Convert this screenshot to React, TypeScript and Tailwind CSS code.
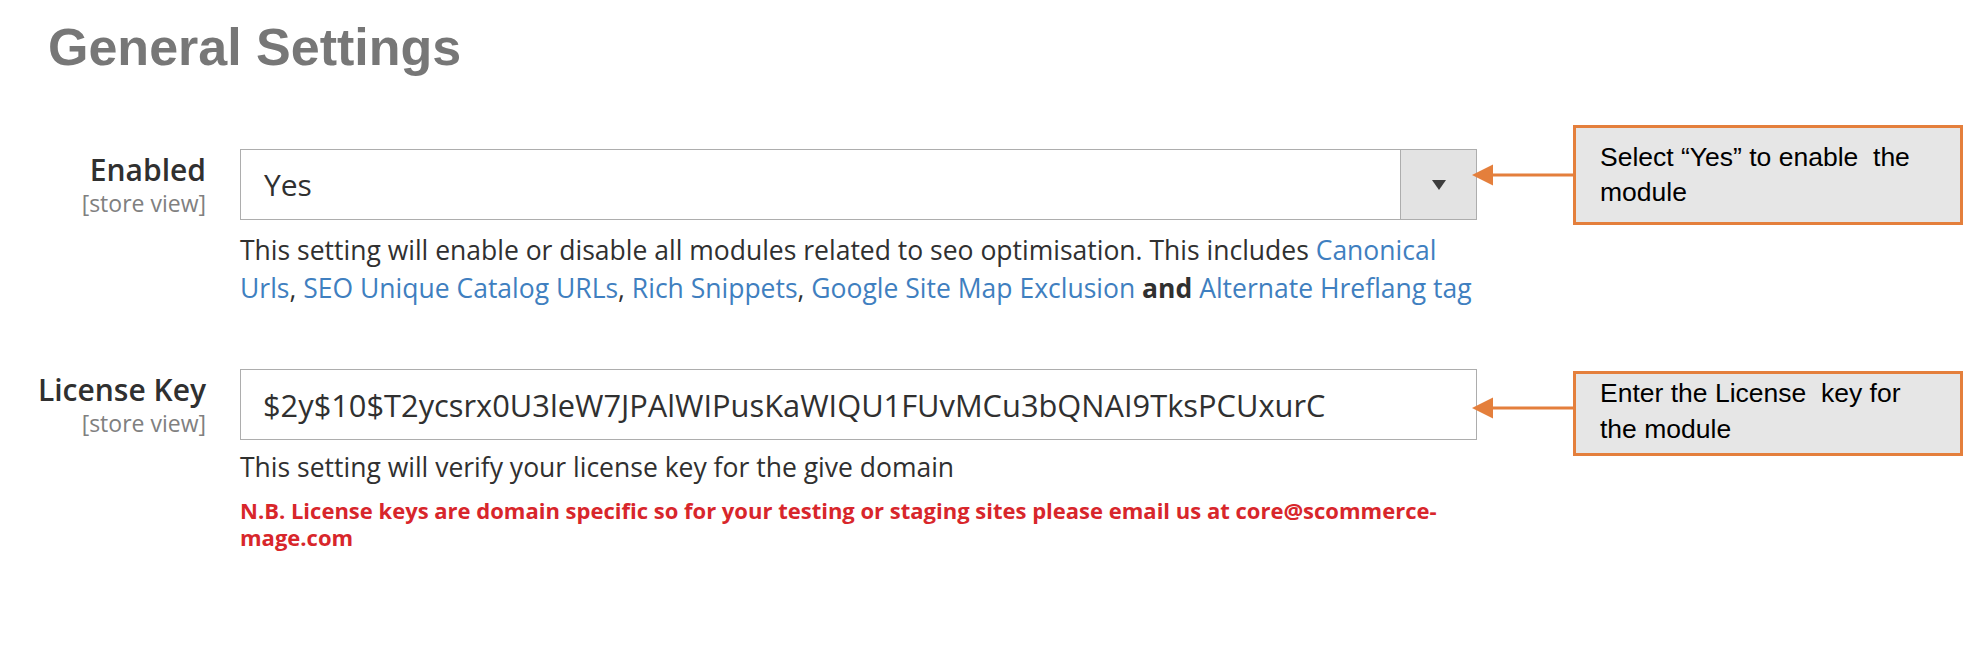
import React from "react";

function Arrow({ className = "" }: { className?: string }) {
  return (
    <svg width="101" height="24" viewBox="0 0 101 24" className={"shrink-0 -ml-[5px] " + className}>
      <line x1="18" y1="12" x2="101" y2="12" stroke="#e47f3c" strokeWidth="3" />
      <polygon points="0,12 21,1.5 21,22.5" fill="#e47f3c" />
    </svg>
  );
}

function Callout({ lines, className }: { lines: string[]; className: string }) {
  return (
    <div
      className={
        "w-[390px] shrink-0 border-[3px] border-[#e47f3c] bg-[#e6e6e6] pl-[24px] font-['Liberation_Sans',Arial,sans-serif] text-[26.5px] text-black whitespace-pre " +
        className
      }
    >
      {lines.map((l, i) => (
        <div key={i}>{l}</div>
      ))}
    </div>
  );
}

function Label({ title }: { title: string }) {
  return (
    <div className="w-[206px] shrink-0 flex flex-col items-end pt-[3px]">
      <div className="text-[30px] leading-[36px] font-semibold text-[#303030]">{title}</div>
      <div className="text-[23px] leading-[28px] text-[#808080] mt-px">[store view]</div>
    </div>
  );
}

export default function App() {
  const link = "text-[#3f7fc0]";
  return (
    <div className="w-[1966px] h-[646px] bg-white overflow-hidden font-['Open_Sans',sans-serif]">
      <h1 className="pl-[48px] pt-[17px] font-['Liberation_Sans',Arial,sans-serif] font-bold text-[52px] leading-[60px] text-[#777777]">
        General Settings
      </h1>

      {/* Enabled row */}
      <div className="flex mt-[72px] gap-[34px]">
        <Label title="Enabled" />
        <div className="flex flex-col">
          <div className="flex items-center">
            <div className="w-[1237px] h-[71px] border border-[#adadad] flex items-stretch bg-white">
              <div className="flex-1 flex items-center pl-[23px] text-[30px] leading-[36px] text-[#303030]">Yes</div>
              <div className="w-[76px] border-l border-[#adadad] bg-[#e3e3e3] flex items-center justify-center">
                <svg width="14" height="10" viewBox="0 0 14 10">
                  <polygon points="0,0 14,0 7,10" fill="#3d3d3d" />
                </svg>
              </div>
            </div>
            <div className="flex items-center -mt-[24px] -mb-[5px]">
              <Arrow />
              <Callout
                className="h-[100px] pt-[12px] leading-[35px]"
                lines={["Select \u201cYes\u201d to enable  the", "module"]}
              />
            </div>
          </div>
          <p className="w-[1237px] mt-[11px] text-[26.5px] leading-[38px] text-[#303030]">
            This setting will enable or disable all modules related to seo optimisation. This includes{" "}
            <span className={link}>Canonical</span>
            <br />
            <span className={link}>Urls</span>, <span className={link}>SEO Unique Catalog URLs</span>,{" "}
            <span className={link}>Rich Snippets</span>, <span className={link}>Google Site Map Exclusion</span>{" "}
            <span className="font-bold">and</span> <span className={link}>Alternate Hreflang tag</span>
          </p>
        </div>
      </div>

      {/* License key row */}
      <div className="flex mt-[62px] gap-[34px]">
        <Label title="License Key" />
        <div className="flex flex-col">
          <div className="flex items-center">
            <div className="w-[1237px] h-[71px] border border-[#adadad] flex items-center pl-[22px] text-[30.8px] leading-[36px] text-[#303030] bg-white">
              $2y$10$T2ycsrx0U3leW7JPAlWIPusKaWIQU1FUvMCu3bQNAI9TksPCUxurC
            </div>
            <div className="flex items-center mt-[1px] -mb-[16px]">
              <Arrow className="-mt-[10px]" />
              <Callout className="h-[85px] pt-[1px] leading-[36px]" lines={["Enter the License  key for", "the module"]} />
            </div>
          </div>
          <p className="w-[1237px] mt-[8px] text-[26.5px] leading-[38px] text-[#303030]">
            This setting will verify your license key for the give domain
          </p>
          <p className="w-[1237px] mt-[11px] text-[22px] leading-[27px] font-bold text-[#d8262b]">
            N.B. License keys are domain specific so for your testing or staging sites please email us at core@scommerce-
            <br />
            mage.com
          </p>
        </div>
      </div>
    </div>
  );
}
